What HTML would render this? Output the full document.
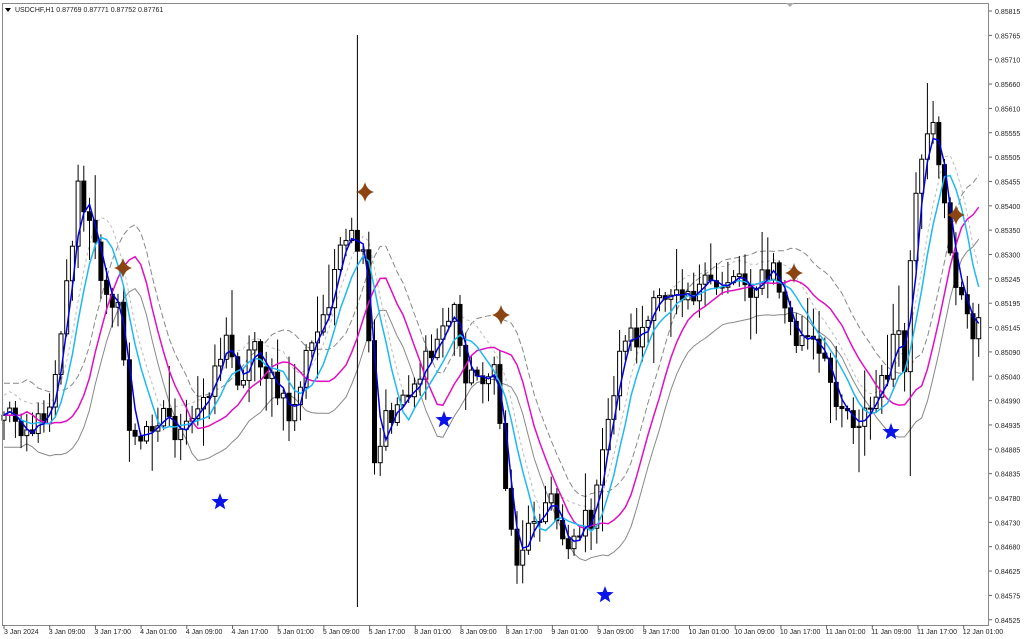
<!DOCTYPE html>
<html><head><meta charset="utf-8"><style>
html,body{margin:0;padding:0;background:#fff;width:1024px;height:639px;overflow:hidden}
svg{display:block}
text{font-family:"Liberation Sans",sans-serif;font-size:7px;fill:#222}
</style></head><body>
<svg id="c" width="1024" height="639" xmlns="http://www.w3.org/2000/svg">
<rect x="0" y="0" width="1024" height="639" fill="#fff"/>
<g id="bands"></g><g id="cand"></g><g id="lines"></g><g id="stars"></g>
<rect x="2.5" y="3.5" width="986" height="622" fill="none" stroke="#888" stroke-width="1"/>
<path d="M786 3 L794 3 L790 7 Z" fill="#aaa"/>
<path d="M5 8 L11 8 L8 12 Z" fill="#000"/>
<text x="15" y="12">USDCHF,H1  0.87769 0.87771 0.87752 0.87761</text>
<g id="axis"></g>
</svg>
<script>
(function(){
var NS="http://www.w3.org/2000/svg";
function el(p,t,a,txt){var e=document.createElementNS(NS,t);for(var k in a)e.setAttribute(k,a[k]);if(txt)e.textContent=txt;document.getElementById(p).appendChild(e);return e;}
var labs=["0.85815","0.85765","0.85710","0.85660","0.85610","0.85555","0.85505","0.85455","0.85400","0.85350","0.85300","0.85245","0.85195","0.85145","0.85090","0.85040","0.84990","0.84935","0.84885","0.84835","0.84780","0.84730","0.84680","0.84625","0.84575","0.84525"];
for(var i=0;i<labs.length;i++){var y=11+i*24.35;el("axis","line",{x1:989,x2:992,y1:y,y2:y,stroke:"#666"});el("axis","text",{x:995,y:y+3},labs[i]);}
var dl=["3 Jan 2024","3 Jan 09:00","3 Jan 17:00","4 Jan 01:00","4 Jan 09:00","4 Jan 17:00","5 Jan 01:00","5 Jan 09:00","5 Jan 17:00","8 Jan 01:00","8 Jan 09:00","8 Jan 17:00","9 Jan 01:00","9 Jan 09:00","9 Jan 17:00","10 Jan 01:00","10 Jan 09:00","10 Jan 17:00","11 Jan 01:00","11 Jan 09:00","11 Jan 17:00","12 Jan 01:00"];
for(var i=0;i<dl.length;i++){var x=4+i*45.7;el("axis","line",{x1:x,x2:x,y1:625,y2:629,stroke:"#666"});el("axis","text",{x:x+(i?-1:0),y:634},dl[i]);}
var W=[[3,410],[20,420],[35,430],[50,400],[65,300],[78,190],[90,230],[100,270],[110,290],[120,320],[130,430],[140,450],[150,420],[165,410],[180,440],[195,420],[210,380],[225,340],[240,380],[255,340],[265,370],[280,400],[292,420],[305,360],[320,330],[335,270],[350,240],[362,250],[368,330],[375,480],[385,420],[395,410],[405,390],[415,380],[430,360],[445,320],[455,310],[462,360],[470,380],[485,370],[495,380],[500,420],[507,500],[515,560],[525,540],[535,510],[550,500],[565,540],[580,530],[595,510],[605,440],[615,380],[625,330],[635,340],[650,320],[660,300],[675,280],[690,290],[705,290],[720,285],[735,270],[750,285],[765,280],[775,270],[785,310],[795,340],[810,340],[825,370],[840,400],[855,420],[870,410],[885,380],[895,330],[905,370],[912,230],[925,150],[935,130],[945,200],[955,290],[965,310],[975,330],[986,310]];
function interp(x){for(var i=1;i<W.length;i++){if(x<=W[i][0]){var a=W[i-1],b=W[i];return a[1]+(b[1]-a[1])*(x-a[0])/(b[0]-a[0]);}}return W[W.length-1][1];}
var s=12345;function r(){s=(s*1103515245+12345)%2147483648;return s/2147483648;}
var N=172,xs=[],cl=[];
for(var i=0;i<N;i++){var x=4+i*5.7;xs.push(x);cl.push(interp(x)+(r()-0.5)*30);}
for(var i=0;i<N;i++){var o=i?cl[i-1]:cl[0]+5,c=cl[i];var hi=Math.min(o,c)-2-r()*20,lo=Math.max(o,c)+2+r()*20;
 if(r()<0.12)hi-=25;if(r()<0.12)lo+=25;
 var x=xs[i];if(Math.abs(x-360)<3){hi=35;lo=607;}if(Math.abs(x-912)<3){lo=476;}if(Math.abs(x-926)<3){hi=83;}
 el("cand","line",{x1:x,x2:x,y1:hi,y2:lo,stroke:"#000","stroke-width":1});
 var bt=Math.min(o,c),h=Math.max(1,Math.abs(o-c));
 el("cand","rect",{x:x-2,y:bt,width:4,height:h,fill:c<o?"#fff":"#000",stroke:"#000","stroke-width":1});}
function sma(a,n){var o=[];for(var i=0;i<a.length;i++){var s=0,k=0;for(var j=Math.max(0,i-n+1);j<=i;j++){s+=a[j];k++;}o.push(s/k);}return o;}
function path(a,sh,off){var d="";for(var i=0;i<a.length;i++){var k=i-sh;if(k<0)k=0;d+=(i?"L":"M")+xs[i].toFixed(1)+" "+(a[k]+off).toFixed(1);}return d;}
var blue=sma(cl,3),cyan=sma(cl,7),mag=sma(cl,10);
el("bands","path",{d:path(mag,3,-32),fill:"none",stroke:"#888","stroke-dasharray":"6,3","stroke-width":1});
el("bands","path",{d:path(mag,3,32),fill:"none",stroke:"#888","stroke-width":1});
el("bands","path",{d:path(cyan,0,-20),fill:"none",stroke:"#bbb","stroke-dasharray":"3,3","stroke-width":1});
el("lines","path",{d:path(mag,3,0),fill:"none",stroke:"#e010c0","stroke-width":1.5});
el("lines","path",{d:path(cyan,0,0),fill:"none",stroke:"#20b8f0","stroke-width":1.5});
el("lines","path",{d:path(blue,0,0),fill:"none",stroke:"#0000e0","stroke-width":1.5});
function brown(x,y){el("stars","path",{d:"M"+x+" "+(y-10)+" Q"+(x+2)+" "+(y-2)+" "+(x+9)+" "+y+" Q"+(x+2)+" "+(y+2)+" "+x+" "+(y+10)+" Q"+(x-2)+" "+(y+2)+" "+(x-9)+" "+y+" Q"+(x-2)+" "+(y-2)+" "+x+" "+(y-10)+"Z",fill:"#8b4513"});}
function bstar(x,y){var d="";for(var k=0;k<10;k++){var R=k%2?3.8:9,a=-Math.PI/2+k*Math.PI/5;d+=(k?"L":"M")+(x+R*Math.cos(a)).toFixed(1)+" "+(y+R*Math.sin(a)).toFixed(1);}el("stars","path",{d:d+"Z",fill:"#0a14e8"});}
[[123,268],[365,192],[501,315],[794,273],[956,215]].forEach(function(p){brown(p[0],p[1]);});
[[220,502],[444,420],[605,595],[891,432]].forEach(function(p){bstar(p[0],p[1]);});
})();
</script>
</body></html>
